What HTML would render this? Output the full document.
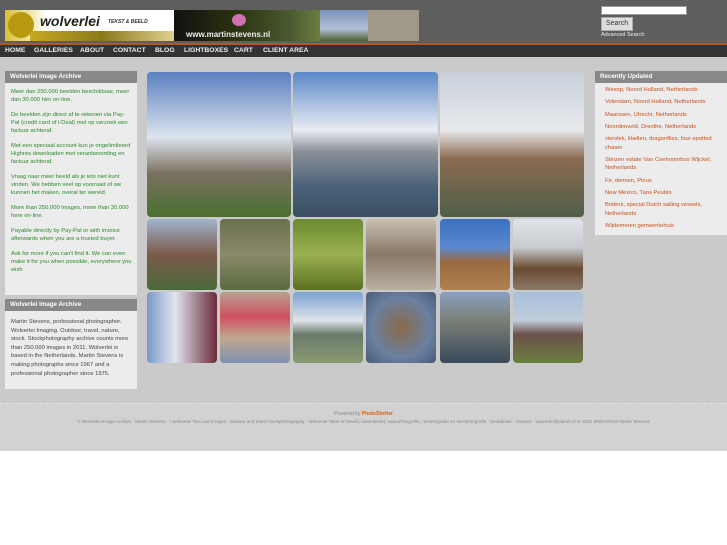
<!DOCTYPE html>
<html><head><meta charset="utf-8"><style>
*{margin:0;padding:0;box-sizing:border-box}
body{width:727px;height:545px;background:#fff;font-family:"Liberation Sans",sans-serif;position:relative;overflow:hidden}
.hdr{position:absolute;left:0;top:0;width:727px;height:45px;background:#5e5e5e;border-bottom:2px solid #b0582a}
.nav{position:absolute;left:0;top:45px;width:727px;height:12px;background:#333;}
.nav span{position:absolute;top:2px;color:#eee;font-size:6.8px;font-weight:bold}
.main{position:absolute;left:0;top:57px;width:727px;height:346px;background:#cacaca}
.foot{position:absolute;left:0;top:403px;width:727px;height:48px;background:#d2d2d2;border-top:1px dashed #e4e4e4}
.ph{position:absolute;border-radius:4px;overflow:hidden}
.box{position:absolute;background:#ececec;}
.bh{position:absolute;background:#888;color:#fff;font-size:6.2px;font-weight:bold;padding:2px 5px;height:12px}
.lt p{font-size:5.8px;line-height:8px;color:#2b8a2b;margin:0 0 7px}
.r a{display:block;color:#c8501c;font-size:5.8px;line-height:8.5px;margin-bottom:3.8px;text-decoration:none}
</style></head><body>
<div class="hdr">
 <div style="position:absolute;left:5px;top:10px;width:169px;height:31px;background:linear-gradient(90deg,#d8c030 0%,#fff 25%,#fff 100%);"></div>
 <div style="position:absolute;left:8px;top:12px;width:26px;height:26px;border-radius:50%;background:#b89a10"></div>
 <div style="position:absolute;left:40px;top:13px;font-size:14px;font-weight:bold;font-style:italic;color:#222">wolverlei</div>
 <div style="position:absolute;left:108px;top:19px;font-size:5px;font-weight:bold;font-style:italic;color:#333">TEKST &amp; BEELD</div>
 <div style="position:absolute;left:30px;top:31px;width:144px;height:10px;background:linear-gradient(90deg,#c8a820,#8a7a18,#e0d090)"></div>
 <div style="position:absolute;left:174px;top:10px;width:146px;height:31px;background:linear-gradient(90deg,#111,#2a3010 40%,#4a5a30 80%,#6a8040)"></div>
 <div style="position:absolute;left:232px;top:14px;width:14px;height:12px;border-radius:50%;background:#d070b0"></div>
 <div style="position:absolute;left:186px;top:30px;font-size:8px;color:#eee;font-weight:bold">www.martinstevens.nl</div>
 <div style="position:absolute;left:320px;top:10px;width:48px;height:31px;background:linear-gradient(#7a90b8,#b0c0d8 60%,#506030)"></div>
 <div style="position:absolute;left:368px;top:10px;width:51px;height:31px;background:#a0988a"></div>
 <div style="position:absolute;left:601px;top:6px;width:86px;height:9px;background:#fff;border:1px solid #999"></div>
 <div style="position:absolute;left:601px;top:17px;width:32px;height:14px;background:#ddd;border:1px solid #aaa;font-size:7px;color:#333;text-align:center;line-height:12px">Search</div>
 <div style="position:absolute;left:601px;top:32px;font-size:5.5px;color:#eee">Advanced Search</div>
</div>
<div class="nav"><span style="left:5px">HOME</span><span style="left:34px">GALLERIES</span><span style="left:80px">ABOUT</span><span style="left:113px">CONTACT</span><span style="left:155px">BLOG</span><span style="left:184px">LIGHTBOXES</span><span style="left:234px">CART</span><span style="left:263px">CLIENT AREA</span></div>
<div class="main"></div>
<div class="box" style="left:5px;top:71px;width:132px;height:224px"></div>
<div class="bh" style="left:5px;top:71px;width:132px">Wolverlei Image Archive</div>
<div class="lt" style="position:absolute;left:11px;top:88px;width:122px">
<p>Meer dan 250.000 beelden beschikbaar, meer dan 30.000 hier on-line.</p>
<p>De beelden zijn direct af te rekenen via Pay-Pal (credit card of i-Deal) met op verzoek een factuur achteraf.</p>
<p>Met een speciaal account kun je ongelimiteerd Highres downloaden met verantwoording en factuur achteraf.</p>
<p>Vraag naar meer beeld als je iets niet kunt vinden. We hebben veel op voorraad of we kunnen het maken, overal ter wereld.</p>
<p>More than 250.000 images, more than 30.000 here on-line.</p>
<p>Payable directly by Pay-Pal or with invoice afterwards when you are a trusted buyer.</p>
<p>Ask for more if you can't find it. We can even make it for you when possible, everywhere you wish</p>
</div>
<div class="box" style="left:5px;top:299px;width:132px;height:90px"></div>
<div class="bh" style="left:5px;top:299px;width:132px">Wolverlei Image Archive</div>
<div style="position:absolute;left:11px;top:318px;width:122px;font-size:5.8px;line-height:8.6px;color:#444">Martin Stevens, professional photographer. Wolverlei Imaging. Outdoor, travel, nature, stock. Stockphotography archive counts more than 250.000 images in 2011. Wolverlei is based in the Netherlands. Martin Stevens is making photographs since 1967 and a professional photographer since 1975.</div>
<div class="box" style="left:595px;top:71px;width:132px;height:164px"></div>
<div class="bh" style="left:595px;top:71px;width:132px">Recently Updated</div>
<div class="r" style="position:absolute;left:605px;top:86px;width:118px">
<a>Weesp, Noord Holland, Netherlands</a><a>Volendam, Noord Holland, Netherlands</a><a>Maarssen, Utrecht, Netherlands</a><a>Noordenveld, Drenthe, Netherlands</a><a>viervlek, libellen, dragonflies, four-spotted chaser</a><a>Stinzen estate Van Coehoornbos Wijckel, Netherlands</a><a>Fir, dennen, Pinus</a><a>New Mexico, Taos Peublo</a><a>Botters, special Dutch sailing vessels, Netherlands</a><a>Wijdemeren gemeentehuis</a>
</div>
<div class="ph" style="left:147px;top:72px;width:144px;height:145px;background:linear-gradient(#5a80c0,#dde4ee 45%,#7a7060 70%,#4a7030)"></div>
<div class="ph" style="left:293px;top:72px;width:145px;height:145px;background:linear-gradient(#5a88c8,#e8ecf2 40%,#8a9098 55%,#4a6078 80%,#3a5060)"></div>
<div class="ph" style="left:440px;top:72px;width:144px;height:145px;background:linear-gradient(#c8d0dc,#e8eaec 40%,#8a6a50 60%,#506048)"></div>
<div class="ph" style="left:147px;top:219px;width:70px;height:71px;background:linear-gradient(#a0b4cc,#7a5a4a 50%,#4a6a3a)"></div>
<div class="ph" style="left:220px;top:219px;width:70px;height:71px;background:linear-gradient(#6a7050,#8a8a6a,#5a6a40)"></div>
<div class="ph" style="left:293px;top:219px;width:70px;height:71px;background:linear-gradient(#6a8a30,#9ab050,#5a7020)"></div>
<div class="ph" style="left:366px;top:219px;width:70px;height:71px;background:linear-gradient(#c8c0b0,#8a7868,#b8b0a0)"></div>
<div class="ph" style="left:440px;top:219px;width:70px;height:71px;background:linear-gradient(#3a70c0,#5a88d0 40%,#9a6a40 60%,#b08050)"></div>
<div class="ph" style="left:513px;top:219px;width:70px;height:71px;background:linear-gradient(#e0e4ea,#c8ccd0 40%,#6a4a30 70%,#8a7a6a)"></div>
<div class="ph" style="left:147px;top:292px;width:70px;height:71px;background:linear-gradient(90deg,#7a9ac8,#e0e4ee 40%,#6a2a3a)"></div>
<div class="ph" style="left:220px;top:292px;width:70px;height:71px;background:linear-gradient(#b8a090,#d05060 35%,#c0a890 65%,#8090b0)"></div>
<div class="ph" style="left:293px;top:292px;width:70px;height:71px;background:linear-gradient(#7aa0d0,#e0e4ea 40%,#6a7a6a 60%,#8a9a70)"></div>
<div class="ph" style="left:366px;top:292px;width:70px;height:71px;background:radial-gradient(#8a6a4a,#6a80a0 60%,#4a5a78)"></div>
<div class="ph" style="left:440px;top:292px;width:70px;height:71px;background:linear-gradient(#8aa0c0,#7a8078 40%,#3a4a5a)"></div>
<div class="ph" style="left:513px;top:292px;width:70px;height:71px;background:linear-gradient(#a8c0dc,#c0ccd8 40%,#6a5048 60%,#6a8040)"></div>
<div class="foot">
<div style="position:absolute;left:0;width:727px;top:7px;text-align:center;font-size:5px;color:#888">Powered by <b style="color:#e06010">PhotoShelter</b></div>
<div style="position:absolute;left:0;width:727px;top:15px;text-align:center;font-size:4.6px;color:#888">© Wolverlei Image Archive · Martin Stevens · / Wolverlei Text and Images , outdoor and travel stockphotography · Wolverlei Tekst en Beeld, buitenbeeld, natuurfotografie, reisfotografie en stockfotografie · beeldbank · Contact · wolverlei@planet.nl or 0031 6505 87043 Martin Stevens</div>
</div>
</body></html>
